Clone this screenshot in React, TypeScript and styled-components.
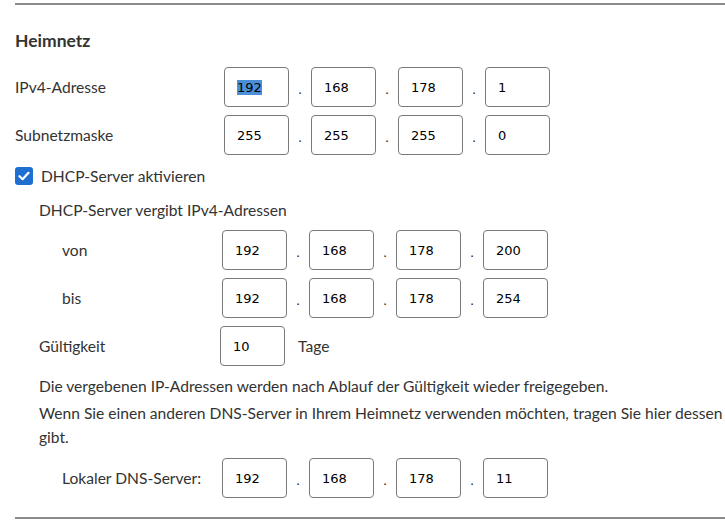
import { useEffect, useRef } from 'react'
import styled, { createGlobalStyle } from 'styled-components'

const GlobalStyle = createGlobalStyle`
  body {
    margin: 0;
    overflow: hidden;
    background: #fff;
    font-family: Lato, "Open Sans", sans-serif;
    color: #333;
  }
`

type Octets = string[]

const IpField = ({ values, selectFirst }: { values: Octets; selectFirst?: boolean }) => {
  const firstRef = useRef<HTMLInputElement>(null)

  useEffect(() => {
    if (selectFirst && firstRef.current) {
      firstRef.current.focus()
      firstRef.current.select()
    }
  }, [selectFirst])

  return (
    <IpGroup>
      {values.map((v, i) => (
        <Octet key={i}>
          {i > 0 && <Dot>.</Dot>}
          <Field ref={i === 0 ? firstRef : undefined} defaultValue={v} />
        </Octet>
      ))}
    </IpGroup>
  )
}

const App = () => {
  return (
    <>
      <GlobalStyle />
      <Page>
        <Rule />
        <Title>Heimnetz</Title>

        <Form>
          <Row $indent={0} $label={209}>
            <Label>IPv4-Adresse</Label>
            <IpField values={['192', '168', '178', '1']} selectFirst />
          </Row>
          <Row $indent={0} $label={209}>
            <Label>Subnetzmaske</Label>
            <IpField values={['255', '255', '255', '0']} />
          </Row>
        </Form>

        <CheckRow>
          <CheckBox>
            <svg width="12" height="10" viewBox="0 0 12 10">
              <path d="M1.5 5.2 L4.6 8.2 L10.5 1.8" fill="none" stroke="#fff" strokeWidth="2.2" strokeLinecap="round" strokeLinejoin="round" />
            </svg>
          </CheckBox>
          <span>DHCP-Server aktivieren</span>
        </CheckRow>

        <Indented>
          <SubHeading>DHCP-Server vergibt IPv4-Adressen</SubHeading>
          <Form $top={10}>
            <Row $indent={23} $label={160}>
              <Label>von</Label>
              <IpField values={['192', '168', '178', '200']} />
            </Row>
            <Row $indent={23} $label={160}>
              <Label>bis</Label>
              <IpField values={['192', '168', '178', '254']} />
            </Row>
            <Row $indent={0} $label={181}>
              <Label>Gültigkeit</Label>
              <Lease>
                <Field defaultValue="10" />
                <span>Tage</span>
              </Lease>
            </Row>
          </Form>

          <Note>Die vergebenen IP-Adressen werden nach Ablauf der Gültigkeit wieder freigegeben.</Note>
          <Note>
            Wenn Sie einen anderen DNS-Server in Ihrem Heimnetz verwenden möchten, tragen Sie hier dessen
            <br />
            gibt.
          </Note>

          <DnsRow>
            <Label>Lokaler DNS-Server:</Label>
            <IpField values={['192', '168', '178', '11']} />
          </DnsRow>
        </Indented>

        <Rule $bottom />
      </Page>
    </>
  )
}

export default App

const Page = styled.div`
  width: 760px;
  padding: 3px 0 0 15px;
`

const Rule = styled.div<{ $bottom?: boolean }>`
  height: 2px;
  background: #8c8c8c;
  margin-top: ${({ $bottom }) => ($bottom ? '19px' : '0')};
`

const Title = styled.h2`
  margin: 0;
  padding-top: 24px;
  height: 32px;
  font-size: 17.5px;
  font-weight: 700;
  color: #333;
  line-height: 24px;
`

const Form = styled.div<{ $top?: number }>`
  display: flex;
  flex-direction: column;
  gap: 8px;
  margin-top: ${({ $top }) => $top ?? 6}px;
`

const Row = styled.div<{ $indent: number; $label: number }>`
  display: grid;
  grid-template-columns: ${({ $label }) => $label}px auto;
  align-items: center;
  padding-left: ${({ $indent }) => $indent}px;
  height: 40px;
`

const Label = styled.span`
  font-size: 15.6px;
`

const IpGroup = styled.div`
  display: flex;
  align-items: center;
`

const Octet = styled.div`
  display: flex;
  align-items: center;
`

const Dot = styled.span`
  width: 22px;
  text-align: center;
  font-family: "DejaVu Sans", sans-serif;
  font-size: 13px;
  color: #222;
  padding-top: 5px;
`

const Field = styled.input`
  box-sizing: border-box;
  width: 65px;
  height: 40px;
  border: 1px solid #7a7a7a;
  border-radius: 4px;
  padding: 0 0 0 12px;
  font-family: "DejaVu Sans", sans-serif;
  font-size: 13px;
  color: #000;
  background: #fff;
  outline: none;

  &::selection {
    background: #4a8fd8;
    color: #000;
  }
`

const CheckRow = styled.label`
  display: flex;
  align-items: center;
  gap: 8px;
  margin-top: 11px;
  height: 20px;
  font-size: 15.6px;
`

const CheckBox = styled.span`
  display: flex;
  align-items: center;
  justify-content: center;
  width: 18px;
  height: 18px;
  border-radius: 3px;
  background: #1f6fd0;
`

const Indented = styled.div`
  padding-left: 24px;
`

const SubHeading = styled.div`
  font-size: 15.6px;
  margin-top: 14px;
  height: 20px;
  line-height: 20px;
`

const Lease = styled.div`
  display: flex;
  align-items: center;
  gap: 13px;
  font-size: 15.6px;
`

const Note = styled.p`
  margin: 0;
  font-size: 15.6px;
  line-height: 24px;
  white-space: nowrap;

  &:first-of-type {
    margin-top: 8px;
  }
  & + & {
    margin-top: 3px;
  }
`

const DnsRow = styled.div`
  display: grid;
  grid-template-columns: 160px auto;
  align-items: center;
  padding-left: 23px;
  margin-top: 9px;
  height: 40px;
`
